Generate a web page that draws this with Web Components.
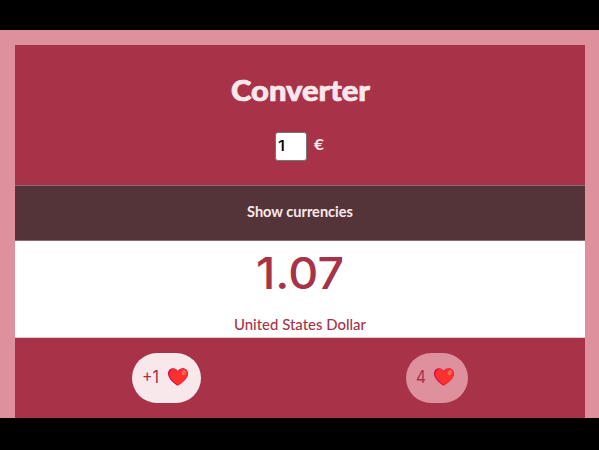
<!DOCTYPE html>
<html lang="en"><head><meta charset="utf-8"><title>Converter</title>
<style>html,body{margin:0;width:599px;height:450px;overflow:hidden;background:#000}</style></head>
<body><currency-app></currency-app>
<script>
// Single line of text fitted to a given width: w, h, base (baseline), size.
class FitText extends HTMLElement{
  connectedCallback(){
    const g=n=>this.getAttribute(n), w=g('w'), h=g('h');
    const r=this.attachShadow({mode:'open'});
    r.innerHTML=`<style>:host{display:block;width:${w}px;height:${h}px;flex:none}svg{display:block;overflow:visible}
    text{fill:currentColor;stroke:currentColor;stroke-width:${g('stroke')||0};stroke-linejoin:round;font-family:${g('face')||'Lato'},"Liberation Sans",sans-serif;font-weight:${g('weight')||400};font-size:${g('size')}px}</style>
    <svg width="${w}" height="${h}"><text x="0" y="${g('base')}" textLength="${w}" lengthAdjust="spacingAndGlyphs"></text></svg>`;
    r.querySelector('text').textContent=g('text');
  }
}
customElements.define('fit-text',FitText);

class HeartIcon extends HTMLElement{
  connectedCallback(){
    this.attachShadow({mode:'open'}).innerHTML=`<style>:host{display:block;width:20px;height:18px;flex:none}svg{display:block}</style>
    <svg width="20" height="18" viewBox="0 0 20 18">
    <path fill="#ca0b4a" d="M9.500 17.800C5.800 15.200 0 10.800 0 5.800 0 2.400 2.300.3 5 .3c2.200 0 3.800 1.100 4.800 2.800C11 1.300 12.600.3 14.700.3 17.700.3 20 2.500 20 5.700c0 5-6.600 9.700-10.500 12.100z"/>
    <path fill="#fd302f" d="M10.400 17.300C6.500 14.600 1.300 10.700 1.300 6.100 1.300 3.100 3.200.9 5.600.7c2 0 3.500 1.200 4.400 3C11 1.900 12.600.6 14.700.6c2.900 0 5 2.100 5 5.100 0 4.700-5.400 8.800-9.300 11.600z"/>
    <ellipse cx="15.800" cy="4.600" rx="1.900" ry="2.700" transform="rotate(25 15.800 4.600)" fill="#ff6455"/></svg>`;
  }
}
customElements.define('heart-icon',HeartIcon);

class LikePill extends HTMLElement{
  connectedCallback(){
    this.attachShadow({mode:'open'}).innerHTML=`<style>:host{box-sizing:border-box;display:flex;height:50px;border-radius:25px;color:#a83248;padding:15px 0 0 10px;background:var(--pill)}
    heart-icon{margin-left:var(--gap)}</style><slot></slot><heart-icon></heart-icon>`;
  }
}
customElements.define('like-pill',LikePill);

class CurrencyApp extends HTMLElement{
  connectedCallback(){
    this.attachShadow({mode:'open'}).innerHTML=`<style>
    :host{display:block;box-sizing:border-box;width:599px;height:450px;padding:30px 0 32px;background:#000}
    .frame{box-sizing:border-box;height:388px;padding:15px 14px 0 15px;background:#de909d}
    header{box-sizing:border-box;height:140px;background:#a83248;color:#f9e8eb;padding-top:27px;display:flex;flex-direction:column;align-items:center}
    .row{display:flex;margin-top:20px;width:50px}
    .field{box-sizing:border-box;width:32px;height:29px;border:1px solid #767676;border-radius:3px;background:#fff;color:#000;padding:3px 0 0 2px;margin-right:7px}
    .toggle{box-sizing:border-box;height:56px;background:#553439;border:1px solid #8b6b70;border-width:1px 0;color:#f9e8eb;display:flex;justify-content:center;padding-top:15px}
    .result{box-sizing:border-box;height:97px;background:#fff;color:#a83248;border-bottom:1px solid #e6c8ce;display:flex;flex-direction:column;align-items:center;padding-top:8px}
    .result fit-text+fit-text{margin-top:20px}
    footer{box-sizing:border-box;height:80px;background:#a83248;display:flex;justify-content:space-between;padding:15px 117px 0}
    .add{width:69px;--pill:#f9e8eb;--gap:9px}
    .count{width:62px;--pill:#de909d;--gap:8px}
    </style>
    <div class="frame">
      <header>
        <fit-text text="Converter" w="139" h="40" base="28.500" size="29" weight="900" stroke=".7"></fit-text>
        <div class="row"><div class="field"><fit-text text="1" w="7" h="20" base="14.500" size="14.500" face="Inter" weight="500"></fit-text></div>
        <fit-text text="€" w="10" h="25" base="18" size="15" weight="700"></fit-text></div>
      </header>
      <div class="toggle"><fit-text text="Show currencies" w="106" h="20" base="15.500" size="14.500" weight="700"></fit-text></div>
      <div class="result"><fit-text text="1.07" w="88" h="45" base="40" size="44" face="Inter" weight="500"></fit-text>
      <fit-text text="United States Dollar" w="132" h="20" base="15.500" size="14.500" weight="500"></fit-text></div>
      <footer>
        <like-pill class="add"><fit-text text="+1" w="17" h="20" base="15" size="17.500" face="Inter"></fit-text></like-pill>
        <like-pill class="count"><fit-text text="4" w="10" h="20" base="15" size="17.500" face="Inter"></fit-text></like-pill>
      </footer>
    </div>`;
  }
}
customElements.define('currency-app',CurrencyApp);
</script></body></html>
